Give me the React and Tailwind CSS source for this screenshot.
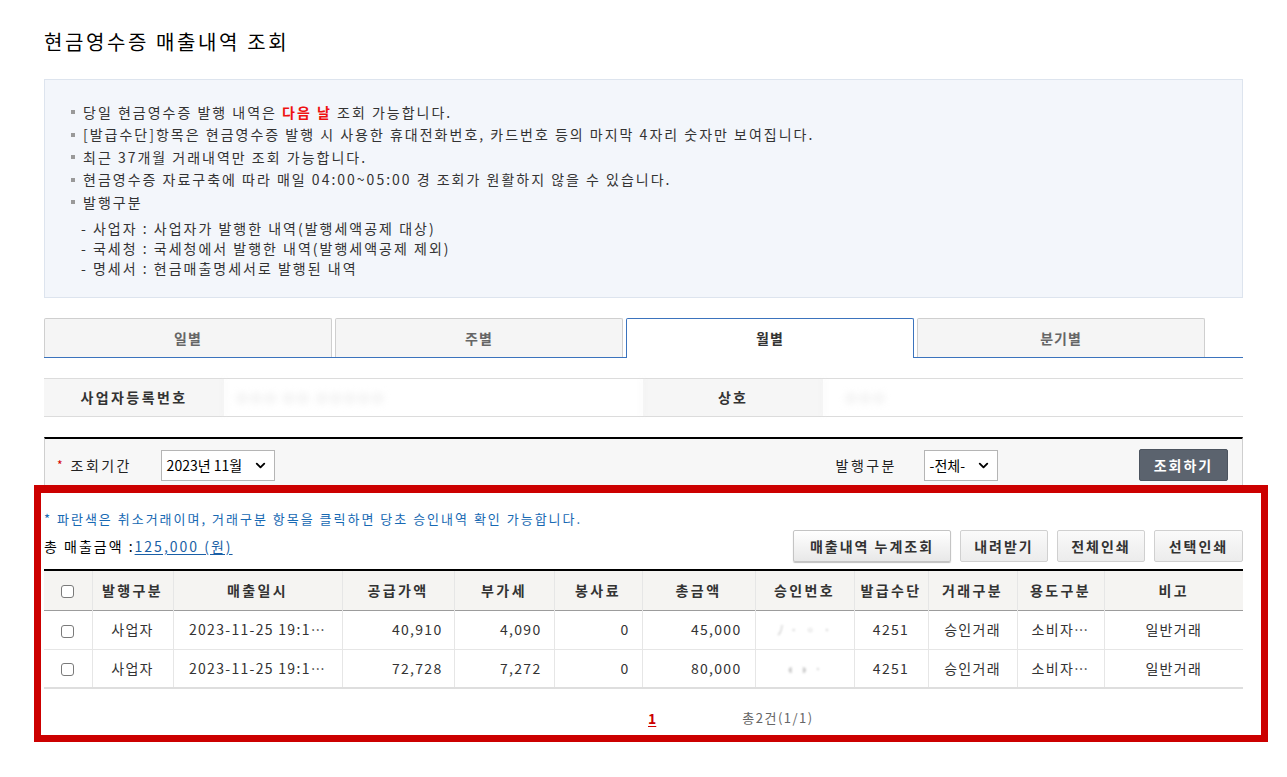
import React from "react";
import { ChevronDown } from "lucide-react";

const notices = [
  null,
  "[발급수단]항목은 현금영수증 발행 시 사용한 휴대전화번호, 카드번호 등의 마지막 4자리 숫자만 보여집니다.",
  "최근 37개월 거래내역만 조회 가능합니다.",
  "현금영수증 자료구축에 따라 매일 04:00~05:00 경 조회가 원활하지 않을 수 있습니다.",
  "발행구분",
];

const kinds = [
  "- 사업자 : 사업자가 발행한 내역(발행세액공제 대상)",
  "- 국세청 : 국세청에서 발행한 내역(발행세액공제 제외)",
  "- 명세서 : 현금매출명세서로 발행된 내역",
];

const tabs = ["일별", "주별", "월별", "분기별"];

const rows = [
  { kind: "사업자", date: "2023-11-25 19:1…", supply: "40,910", vat: "4,090", fee: "0", total: "45,000", approval: "ﾉ · ◦ ·", card: "4251", trade: "승인거래", use: "소비자…", note: "일반거래" },
  { kind: "사업자", date: "2023-11-25 19:1…", supply: "72,728", vat: "7,272", fee: "0", total: "80,000", approval: "◖ ◗ ·", card: "4251", trade: "승인거래", use: "소비자…", note: "일반거래" },
];

const Check = () => (
  <span className="inline-block w-[13px] h-[13px] rounded-[3px] border border-[#7a7a7a] bg-white align-middle" />
);

const FakeSelect = ({ label, width }) => (
  <div className={`flex items-center justify-between h-[31px] ${width} border border-[#b5b5b5] bg-white pl-[5px] pr-[6px] text-[14px] text-black`}>
    <span>{label}</span>
    <ChevronDown size={15} strokeWidth={3} />
  </div>
);

export default function App() {
  return (
    <div className="min-h-screen bg-white font-['Noto_Sans_CJK_KR',sans-serif] text-[#333]">
      <div className="ml-[44px] w-[1199px] pt-[28px]">
        <h1 className="text-[20px] leading-[28px] tracking-[2.6px] text-black">현금영수증 매출내역 조회</h1>

        {/* 안내 박스 */}
        <div className="mt-[23px] h-[219px] border border-[#dde4ee] bg-[#f3f6fb] pt-[21px] pl-[26px] text-[14px] tracking-[2px] text-[#333]">
          <ul>
            {notices.map((t, i) => (
              <li key={i} className="flex items-center h-[22.5px]">
                <span className="w-[4px] h-[4px] bg-[#999] mr-[8px]" />
                {t === null ? (
                  <span>
                    당일 현금영수증 발행 내역은 <b className="text-[#ee1111]">다음 날</b> 조회 가능합니다.
                  </span>
                ) : (
                  <span>{t}</span>
                )}
              </li>
            ))}
          </ul>
          <ul className="mt-[4px] pl-[10px]">
            {kinds.map((t) => (
              <li key={t} className="h-[20px] leading-[20px]">{t}</li>
            ))}
          </ul>
        </div>

        {/* 탭 */}
        <div className="mt-[20px] flex h-[40px] items-end gap-[3px] border-b border-[#3b73bd]">
          {tabs.map((t, i) =>
            i === 2 ? (
              <div key={t} className="-mb-px flex h-[40px] w-[288px] items-center justify-center rounded-t-[2px] border border-b-0 border-[#3b73bd] bg-white text-[14px] font-bold tracking-[1px] text-[#333]">
                {t}
              </div>
            ) : (
              <div key={t} className="flex h-[39px] w-[288px] items-center justify-center rounded-t-[2px] border border-b-0 border-[#cfcfcf] bg-[#f5f5f5] text-[14px] font-bold tracking-[1px] text-[#666]">
                {t}
              </div>
            )
          )}
        </div>

        {/* 사업자 정보 */}
        <div className="mt-[20px] flex h-[39px] border-y border-[#dcdcdc] text-[14px]">
          <div className="flex w-[180px] items-center justify-center bg-[#f6f6f6] font-bold tracking-[2.4px]">사업자등록번호</div>
          <div className="flex w-[419px] items-center border-x border-[#eaeaea] pl-[10px] text-[#f6f6f6] blur-[3px]">●●●-●●-●●●●●</div>
          <div className="flex w-[180px] items-center justify-center bg-[#f6f6f6] font-bold tracking-[2px]">상호</div>
          <div className="flex flex-1 items-center border-l border-[#eaeaea] pl-[20px] text-[#f6f6f6] blur-[3px]">●●●</div>
        </div>

        {/* 조회 조건 */}
        <div className="mt-[20px] flex items-center border-t-2 border-t-black border-x border-x-[#cfcfcf] bg-[#f7f7f7] pt-[10px] pb-[10px] pl-[12px] pr-[14px] text-[14px]">
          <span className="text-[#d60000] mr-[8px] text-[12px]">*</span>
          <span className="w-[90px] tracking-[2.4px] text-[#222]">조회기간</span>
          <FakeSelect label="2023년 11월" width="w-[114px]" />
          <span className="ml-[561px] w-[88px] tracking-[2.4px] text-[#222]">발행구분</span>
          <FakeSelect label="-전체-" width="w-[74px]" />
          <button className="ml-auto h-[32px] w-[89px] rounded-[2px] border border-[#4c545f] bg-[#5b636e] text-[14px] font-bold tracking-[2px] text-white">
            조회하기
          </button>
        </div>

        {/* 조회 결과 (빨간 강조 테두리) */}
        <div className="relative z-10 -mt-[6px] -ml-[10px] w-[1234px] border-[7px] border-t-[8px] border-[#cc0000] bg-white pl-[3px] pr-[18px]">
          <p className="pt-[16px] text-[13px] leading-[20px] tracking-[2px] text-[#1769b3]">
            * 파란색은 취소거래이며, 거래구분 항목을 클릭하면 당초 승인내역 확인 가능합니다.
          </p>
          <div className="mt-[1px] flex h-[32px] items-center justify-between">
            <div className="pt-[1px] text-[14px] text-black tracking-[2px]">
              총 매출금액 :<span className="text-[#1a5fa6] underline underline-offset-2">125,000 (원)</span>
            </div>
            <div className="flex gap-[9px] text-[14px] font-bold tracking-[2px] text-[#333]">
              <button className="h-[32px] w-[158px] rounded-[2px] border border-[#c4c4c4] bg-gradient-to-b from-white to-[#e8e8e8] shadow-[0_1px_1px_rgba(0,0,0,0.25)]">매출내역 누계조회</button>
              <button className="h-[32px] w-[88px] rounded-[2px] border border-[#d0d0d0] bg-gradient-to-b from-[#fafafa] to-[#ececec]">내려받기</button>
              <button className="h-[32px] w-[88px] rounded-[2px] border border-[#d0d0d0] bg-gradient-to-b from-[#fafafa] to-[#ececec]">전체인쇄</button>
              <button className="h-[32px] w-[89px] rounded-[2px] border border-[#d0d0d0] bg-gradient-to-b from-[#fafafa] to-[#ececec]">선택인쇄</button>
            </div>
          </div>

          <table className="mt-[7px] w-[1199px] table-fixed border-collapse border-t-2 border-black text-[14px]">
            <colgroup>
              <col className="w-[48px]" />
              <col className="w-[81px]" />
              <col className="w-[169px]" />
              <col className="w-[112px]" />
              <col className="w-[100px]" />
              <col className="w-[88px]" />
              <col className="w-[113px]" />
              <col className="w-[99px]" />
              <col className="w-[74px]" />
              <col className="w-[89px]" />
              <col className="w-[87px]" />
              <col className="w-[139px]" />
            </colgroup>
            <thead>
              <tr className="h-[40px] border-b border-[#9c9c9c] bg-[#f5f4f2] font-bold tracking-[2.4px] text-[#333]">
                <th className="border-r border-[#e6e6e6]"><Check /></th>
                {["발행구분", "매출일시", "공급가액", "부가세", "봉사료", "총금액", "승인번호", "발급수단", "거래구분", "용도구분", "비고"].map((h, i, a) => (
                  <th key={h} className={`font-bold ${i < a.length - 1 ? "border-r border-[#e6e6e6]" : ""}`}>{h}</th>
                ))}
              </tr>
            </thead>
            <tbody className="tracking-[1.3px] text-[#333]">
              {rows.map((r, i) => (
                <tr key={i} className={`h-[39px] ${i === rows.length - 1 ? "border-b-2 border-[#dedede]" : "border-b border-[#e6e6e6]"}`}>
                  <td className="border-r border-[#e6e6e6] text-center"><Check /></td>
                  <td className="border-r border-[#e6e6e6] text-center">{r.kind}</td>
                  <td className="border-r border-[#e6e6e6] text-center">{r.date}</td>
                  <td className="border-r border-[#e6e6e6] pr-[11px] text-right">{r.supply}</td>
                  <td className="border-r border-[#e6e6e6] pr-[12px] text-right">{r.vat}</td>
                  <td className="border-r border-[#e6e6e6] pr-[12px] text-right">{r.fee}</td>
                  <td className="border-r border-[#e6e6e6] pr-[13px] text-right">{r.total}</td>
                  <td className="border-r border-[#e6e6e6] text-center text-[#c8c8c8] blur-[1px]">{r.approval}</td>
                  <td className="border-r border-[#e6e6e6] text-center">{r.card}</td>
                  <td className="border-r border-[#e6e6e6] text-center">{r.trade}</td>
                  <td className="border-r border-[#e6e6e6] text-center">{r.use}</td>
                  <td className="text-center">{r.note}</td>
                </tr>
              ))}
            </tbody>
          </table>

          <div className="flex h-[46px] items-center pt-[12px] text-[14px]">
            <span className="ml-[604px] font-bold text-[#cc0000] underline underline-offset-2">1</span>
            <span className="ml-[86px] text-[13px] tracking-[1.5px] text-[#666]">총2건(1/1)</span>
          </div>
        </div>
      </div>
    </div>
  );
}
